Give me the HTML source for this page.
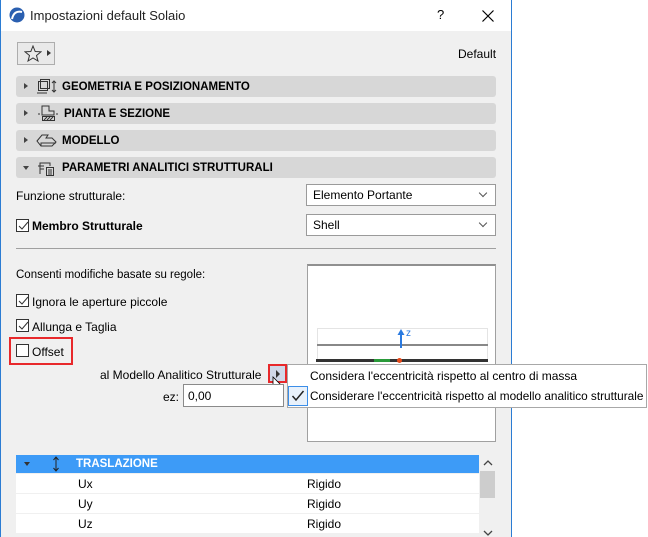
<!DOCTYPE html>
<html><head><meta charset="utf-8"><style>
*{box-sizing:border-box;margin:0;padding:0}
body{width:648px;height:537px;background:#fff;font-family:"Liberation Sans",sans-serif;font-size:12px;color:#000;position:relative;overflow:hidden}
.a{position:absolute;white-space:nowrap}
.win{left:0;top:0;width:512px;height:537px;border-left:1px solid #2b7cd3;border-right:1px solid #2b7cd3;background:#f0f0f0}
.title{left:1px;top:0;width:510px;height:31px;background:#fff}
.bar{left:16px;width:480px;height:21px;background:#d7d7d7;border-radius:3px;font-weight:bold;font-size:11.5px;line-height:23px}
.bar .t{position:absolute;top:0}
.tri{position:absolute;left:8px;top:7px;width:0;height:0;border-left:4px solid #444;border-top:3.5px solid transparent;border-bottom:3.5px solid transparent}
.cb{width:13px;height:13px;border:1px solid #333;background:#fff}
.dd{left:306px;width:190px;height:22px;background:#fff;border:1px solid #9a9a9a;padding-left:6px;line-height:21px}
.dd:after{content:"";position:absolute;right:9px;top:5px;width:5px;height:5px;border-right:1px solid #555;border-bottom:1px solid #555;transform:rotate(45deg)}
.row{left:16px;width:463px;height:19px;background:#fff;line-height:21px}
</style></head><body>
<div class="a win"></div>
<div class="a title"></div>
<svg class="a" style="left:9px;top:7px" width="16" height="16"><circle cx="8" cy="8" r="7.5" fill="#2a5fb0"/><path d="M3 12 Q5 3 13 5" stroke="#fff" stroke-width="2" fill="none"/></svg>
<div class="a" style="left:30px;top:8px;font-size:13px;color:#222">Impostazioni default Solaio</div>
<div class="a" style="left:437px;top:7px;font-size:13px">?</div>
<svg class="a" style="left:482px;top:10px" width="12" height="12"><path d="M0.5 0.5L11.5 11.5M11.5 0.5L0.5 11.5" stroke="#000" stroke-width="1.2"/></svg>

<div class="a" style="left:17px;top:42px;width:38px;height:23px;border:1px solid #adadad;background:#e9e9e9"></div>
<svg class="a" style="left:24px;top:45px" width="18" height="17"><path d="M9 1L11.2 6.5 17 6.8 12.5 10.5 14 16 9 13 4 16 5.5 10.5 1 6.8 6.8 6.5Z" fill="none" stroke="#333" stroke-width="1"/></svg>
<div class="a" style="left:47px;top:50px;border-left:4px solid #333;border-top:3.5px solid transparent;border-bottom:3.5px solid transparent"></div>
<div class="a" style="left:458px;top:47px;font-size:12px">Default</div>

<div class="a bar" style="top:76px"><div class="tri"></div>
<svg class="a" style="left:20px;top:3px" width="22" height="16" fill="none" stroke="#333"><rect x="2.5" y="2.5" width="9" height="9"/><rect x="4.5" y="0.5" width="9" height="9"/><path d="M1 14h10M18 2v11M16 4l2-2 2 2M16 11l2 2 2-2"/></svg>
<span class="t" style="left:46px">GEOMETRIA E POSIZIONAMENTO</span></div>
<div class="a bar" style="top:103px"><div class="tri"></div>
<svg class="a" style="left:20px;top:2px" width="24" height="17" fill="none" stroke="#333"><path d="M6 1h7v5h5v4H6Z"/><rect x="6.5" y="11.5" width="12" height="4"/><path d="M2 9h2M20 9h2M8 15l3-3M11 15l3-3M14 15l3-3"/></svg>
<span class="t" style="left:48px">PIANTA E SEZIONE</span></div>
<div class="a bar" style="top:130px"><div class="tri"></div>
<svg class="a" style="left:20px;top:3px" width="22" height="16" fill="none" stroke="#333"><path d="M1 8l5-6h6l-2 3h6l4 4-4 4H5Z M5 13V10h15"/></svg>
<span class="t" style="left:46px">MODELLO</span></div>
<div class="a bar" style="top:157px"><div style="position:absolute;left:7px;top:9px;border-top:4px solid #444;border-left:3.5px solid transparent;border-right:3.5px solid transparent"></div>
<svg class="a" style="left:21px;top:3px" width="20" height="16" fill="none" stroke="#333"><path d="M3 14V3h10v3M1 6h6M3 9h4"/><rect x="9.5" y="7.5" width="7" height="8"/><path d="M11 10h4M11 12h4M11 14h4"/></svg>
<span class="t" style="left:46px">PARAMETRI ANALITICI STRUTTURALI</span></div>

<div class="a" style="left:16px;top:189px">Funzione strutturale:</div>
<div class="a dd" style="top:184px">Elemento Portante</div>
<div class="a cb" style="left:16px;top:219px"></div>
<svg class="a" style="left:17px;top:220px" width="12" height="12"><path d="M2 6l3 3 6-7" stroke="#333" fill="none"/></svg>
<div class="a" style="left:32px;top:219px;font-weight:bold">Membro Strutturale</div>
<div class="a dd" style="top:214px">Shell</div>
<div class="a" style="left:16px;top:248px;width:480px;height:1px;background:#a0a0a0"></div>

<div class="a" style="left:16px;top:269px;font-size:11.5px">Consenti modifiche basate su regole:</div>
<div class="a cb" style="left:16px;top:294px"></div>
<svg class="a" style="left:17px;top:295px" width="12" height="12"><path d="M2 6l3 3 6-7" stroke="#333" fill="none"/></svg>
<div class="a" style="left:32px;top:295px">Ignora le aperture piccole</div>
<div class="a cb" style="left:16px;top:319px"></div>
<svg class="a" style="left:17px;top:320px" width="12" height="12"><path d="M2 6l3 3 6-7" stroke="#333" fill="none"/></svg>
<div class="a" style="left:32px;top:320px">Allunga e Taglia</div>
<div class="a" style="left:9px;top:337px;width:64px;height:28px;border:2px solid #e8282b"></div>
<div class="a cb" style="left:16px;top:344px"></div>
<div class="a" style="left:32px;top:345px">Offset</div>

<div class="a" style="left:307px;top:264px;width:189px;height:178px;background:#fff;border:1px solid #a0a0a0;border-top:2px solid #909090"></div>
<div class="a" style="left:317px;top:328px;width:171px;height:33px;border:1px solid #e4e4e4;border-bottom:none"></div>
<div class="a" style="left:317px;top:344px;width:171px;height:2px;background:#888"></div>
<div class="a" style="left:316px;top:359px;width:172px;height:3px;background:#333"></div>
<div class="a" style="left:374px;top:359px;width:16px;height:3px;background:#2a9a3a"></div>
<div class="a" style="left:397px;top:358px;width:5px;height:5px;border-radius:50%;background:#e84a1a"></div>
<svg class="a" style="left:396px;top:327px" width="20" height="22"><path d="M5 21V6" stroke="#2a7ae0" stroke-width="2"/><path d="M1.5 8L5 2 8.5 8Z" fill="#2a7ae0"/><text x="10" y="9" font-size="10" fill="#2a7ae0" font-family="Liberation Sans">z</text></svg>

<div class="a" style="left:100px;top:368px">al Modello Analitico Strutturale</div>
<div class="a" style="left:268px;top:364px;width:19px;height:19px;border:2px solid #e8282b;background:#d0d8e8"></div>
<div class="a" style="left:276px;top:370px;border-left:4px solid #333;border-top:4px solid transparent;border-bottom:4px solid transparent"></div>
<svg class="a" style="left:272px;top:376px" width="12" height="18"><path d="M1 1v13l3-3 2 5 2-1-2-5h4Z" fill="#fff" stroke="#000" stroke-width="0.8"/></svg>
<div class="a" style="left:163px;top:390px">ez:</div>
<div class="a" style="left:183px;top:384px;width:101px;height:23px;background:#fff;border:1px solid #8a8a8a;padding-left:4px;line-height:22px">0,00</div>

<div class="a" style="left:287px;top:364px;width:360px;height:44px;background:#fff;border:1px solid #a8a8a8"></div>
<div class="a" style="left:310px;top:369px">Considera l'eccentricità rispetto al centro di massa</div>
<div class="a" style="left:288px;top:386px;width:20px;height:20px;border:1px solid #3c8ee8;background:#e8f1fb"></div>
<svg class="a" style="left:291px;top:389px" width="14" height="14"><path d="M1.5 7l3.5 4 7.5-9" stroke="#222" stroke-width="1.5" fill="none"/></svg>
<div class="a" style="left:310px;top:389px;font-size:11.8px">Considerare l'eccentricità rispetto al modello analitico strutturale</div>

<div class="a" style="left:16px;top:455px;width:463px;height:18px;background:#3d9bf7"></div>
<div class="a" style="left:24px;top:462px;border-top:4px solid #333;border-left:3.5px solid transparent;border-right:3.5px solid transparent"></div>
<svg class="a" style="left:52px;top:456px" width="8" height="16"><path d="M4 1v14M1.5 4L4 1 6.5 4M1.5 12L4 15 6.5 12" stroke="#222" fill="none"/></svg>
<div class="a" style="left:76px;top:458px;color:#fff;font-weight:bold;font-size:11.5px">TRASLAZIONE</div>
<div class="a row" style="top:474px"><span class="a" style="left:62px">Ux</span><span class="a" style="left:291px">Rigido</span></div>
<div class="a row" style="top:494px"><span class="a" style="left:62px">Uy</span><span class="a" style="left:291px">Rigido</span></div>
<div class="a row" style="top:514px"><span class="a" style="left:62px">Uz</span><span class="a" style="left:291px">Rigido</span></div>
<div class="a" style="left:480px;top:471px;width:15px;height:27px;background:#cdcdcd"></div>
<svg class="a" style="left:483px;top:459px" width="10" height="8"><path d="M1 6l4-4 4 4" stroke="#444" stroke-width="1.3" fill="none"/></svg>
<svg class="a" style="left:483px;top:530px" width="10" height="7"><path d="M1 1l4 4 4-4" stroke="#444" stroke-width="1.3" fill="none"/></svg>
</body></html>
